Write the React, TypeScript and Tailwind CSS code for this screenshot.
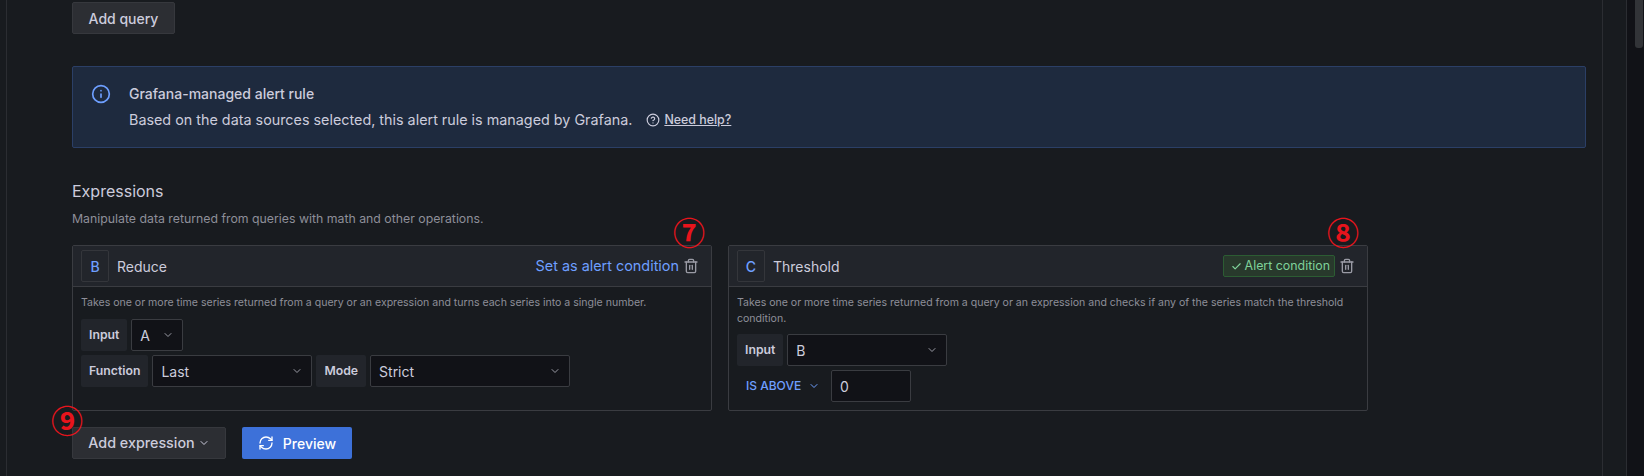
import { Check, ChevronDown, CircleHelp, Info, RefreshCw, Trash2 } from 'lucide-react';

function Label({ text }: { text: string }) {
  return (
    <div className="flex h-8 items-center rounded-[2px] bg-[#22252b] px-2 text-[12.25px] font-semibold text-[#ccccdc]">
      {text}
    </div>
  );
}

function Select({ value, width }: { value: string; width: string }) {
  return (
    <div className={`flex h-8 items-center justify-between rounded-[2px] border border-[#3a3c41] bg-[#111217] pl-[8px] pr-[8px] text-[14px] text-[#ccccdc] ${width}`}>
      <span>{value}</span>
      <ChevronDown size={12} className="text-[#9a9ba5]" />
    </div>
  );
}

function CardHeader({ letter, title, children }: { letter: string; title: string; children: React.ReactNode }) {
  return (
    <div className="flex h-[41px] items-center border-b border-[#3a3c41] bg-[#22252b] pl-2 pr-[12px]">
      <div className="flex h-8 w-[28px] items-center justify-center rounded-[2px] border border-[#34363b] text-[14px] font-medium text-[#6e9fff]">
        {letter}
      </div>
      <span className="ml-2 text-[14px] text-[#ccccdc]">{title}</span>
      <div className="ml-auto flex items-center">{children}</div>
    </div>
  );
}

export default function App() {
  return (
    <div className="relative flex h-[476px] w-full overflow-hidden bg-[#181b1f] font-['Inter',sans-serif]">
      <div className="w-[7px] shrink-0 border-r border-[#2b2d32]" />

      <div className="w-[1595px] shrink-0 pl-[65px] pr-4 pt-[2px]">
        <button className="flex h-8 w-[103px] items-center justify-center rounded-[2px] border border-[#36383d] bg-[#2c2e33] text-[14px] font-medium text-[#ccccdc]">
          Add query
        </button>

        <div className="mt-8 flex h-[82px] rounded-[2px] border border-[#2b3f66] bg-[#1e2a3e] pl-[18px] pt-[17px]">
          <Info size={20} className="text-[#6e9fff]" />
          <div className="ml-[18px] text-[14px] text-[#ccccdc]">
            <div className="font-medium leading-5">Grafana-managed alert rule</div>
            <div className="mt-[6px] flex items-center text-[14.35px] leading-5">
              Based on the data sources selected, this alert rule is managed by Grafana.
              <CircleHelp size={14} className="ml-[14px] mr-[4px]" />
              <span className="text-[12.4px] font-medium underline">Need help?</span>
            </div>
          </div>
        </div>

        <div className="mt-[32px] text-[16px] leading-[22px] text-[#ccccdc]">Expressions</div>
        <div className="mt-[8px] text-[12.3px] leading-[18px] text-[#8e8f99]">
          Manipulate data returned from queries with math and other operations.
        </div>

        <div className="mt-[17px] flex gap-4">
          <div className="h-[166px] w-[640px] rounded-[2px] border border-[#3a3c41]">
            <CardHeader letter="B" title="Reduce">
              <span className="text-[14.4px] text-[#6e9fff]">Set as alert condition</span>
              <Trash2 size={16} className="ml-[4px] text-[#9a9ba5]" />
            </CardHeader>
            <div className="px-2 pt-[7px]">
              <div className="text-[10.55px] leading-[18px] text-[#8e8f99]">
                Takes one or more time series returned from a query or an expression and turns each series into a single number.
              </div>
              <div className="mt-[7px] flex gap-1">
                <Label text="Input" />
                <Select value="A" width="w-[52px]" />
              </div>
              <div className="mt-1 flex gap-1">
                <Label text="Function" />
                <Select value="Last" width="w-[160px]" />
                <Label text="Mode" />
                <Select value="Strict" width="w-[200px]" />
              </div>
            </div>
          </div>

          <div className="h-[166px] w-[640px] rounded-[2px] border border-[#3a3c41]">
            <CardHeader letter="C" title="Threshold">
              <div className="flex h-[22px] items-center rounded-[2px] border border-[#2c5c33] bg-[#28392c] pl-[7px] pr-[4px] text-[12.4px] text-[#7fd29a]">
                <Check size={11} strokeWidth={2.5} className="mr-[3px]" />
                Alert condition
              </div>
              <Trash2 size={16} className="ml-[4px] text-[#9a9ba5]" />
            </CardHeader>
            <div className="px-2 pt-[8px]">
              <div className="text-[10.55px] leading-4 text-[#8e8f99]">
                Takes one or more time series returned from a query or an expression and checks if any of the series match the threshold condition.
              </div>
              <div className="mt-[7px] flex gap-1">
                <Label text="Input" />
                <Select value="B" width="w-[160px]" />
              </div>
              <div className="mt-1 flex items-center">
                <div className="flex h-8 w-[94px] items-center pl-[9px] text-[12px] font-medium text-[#6e9fff]">
                  IS ABOVE
                  <ChevronDown size={12} className="ml-[7px]" />
                </div>
                <div className="flex h-8 w-[80px] items-center rounded-[2px] border border-[#3a3c41] bg-[#111217] pl-2 text-[14px] text-[#ccccdc]">
                  0
                </div>
              </div>
            </div>
          </div>
        </div>

        <div className="mt-[16px] flex gap-[16px]">
          <button className="flex h-8 w-[154px] items-center justify-center rounded-[2px] border border-[#36383d] bg-[#2c2e33] text-[14.3px] font-medium text-[#ccccdc]">
            Add expression
            <ChevronDown size={12} className="ml-[3px]" />
          </button>
          <button className="flex h-8 w-[110px] items-center justify-center rounded-[2px] bg-[#3d71d9] text-[14px] font-medium text-white">
            <RefreshCw size={16} className="mr-[9px]" />
            Preview
          </button>
        </div>
      </div>

      <div className="w-[25px] shrink-0 border-x border-[#2b2d32]" />
      <div className="relative flex-1 bg-[#111217]">
        <div className="ml-[8px] h-[48px] w-[8px] rounded-b-[3px] bg-[#323438]" />
      </div>

      {/* red annotation marks drawn over the screenshot */}
      <span className="absolute left-[673px] top-[212px] font-['Noto_Sans_CJK_JP',sans-serif] text-[32px] font-bold leading-[38px] text-[#e8141c]">⑦</span>
      <span className="absolute left-[1327px] top-[212px] font-['Noto_Sans_CJK_JP',sans-serif] text-[32px] font-bold leading-[38px] text-[#e8141c]">⑧</span>
      <span className="absolute left-[51px] top-[400px] font-['Noto_Sans_CJK_JP',sans-serif] text-[32px] font-bold leading-[38px] text-[#e8141c]">⑨</span>
    </div>
  );
}
